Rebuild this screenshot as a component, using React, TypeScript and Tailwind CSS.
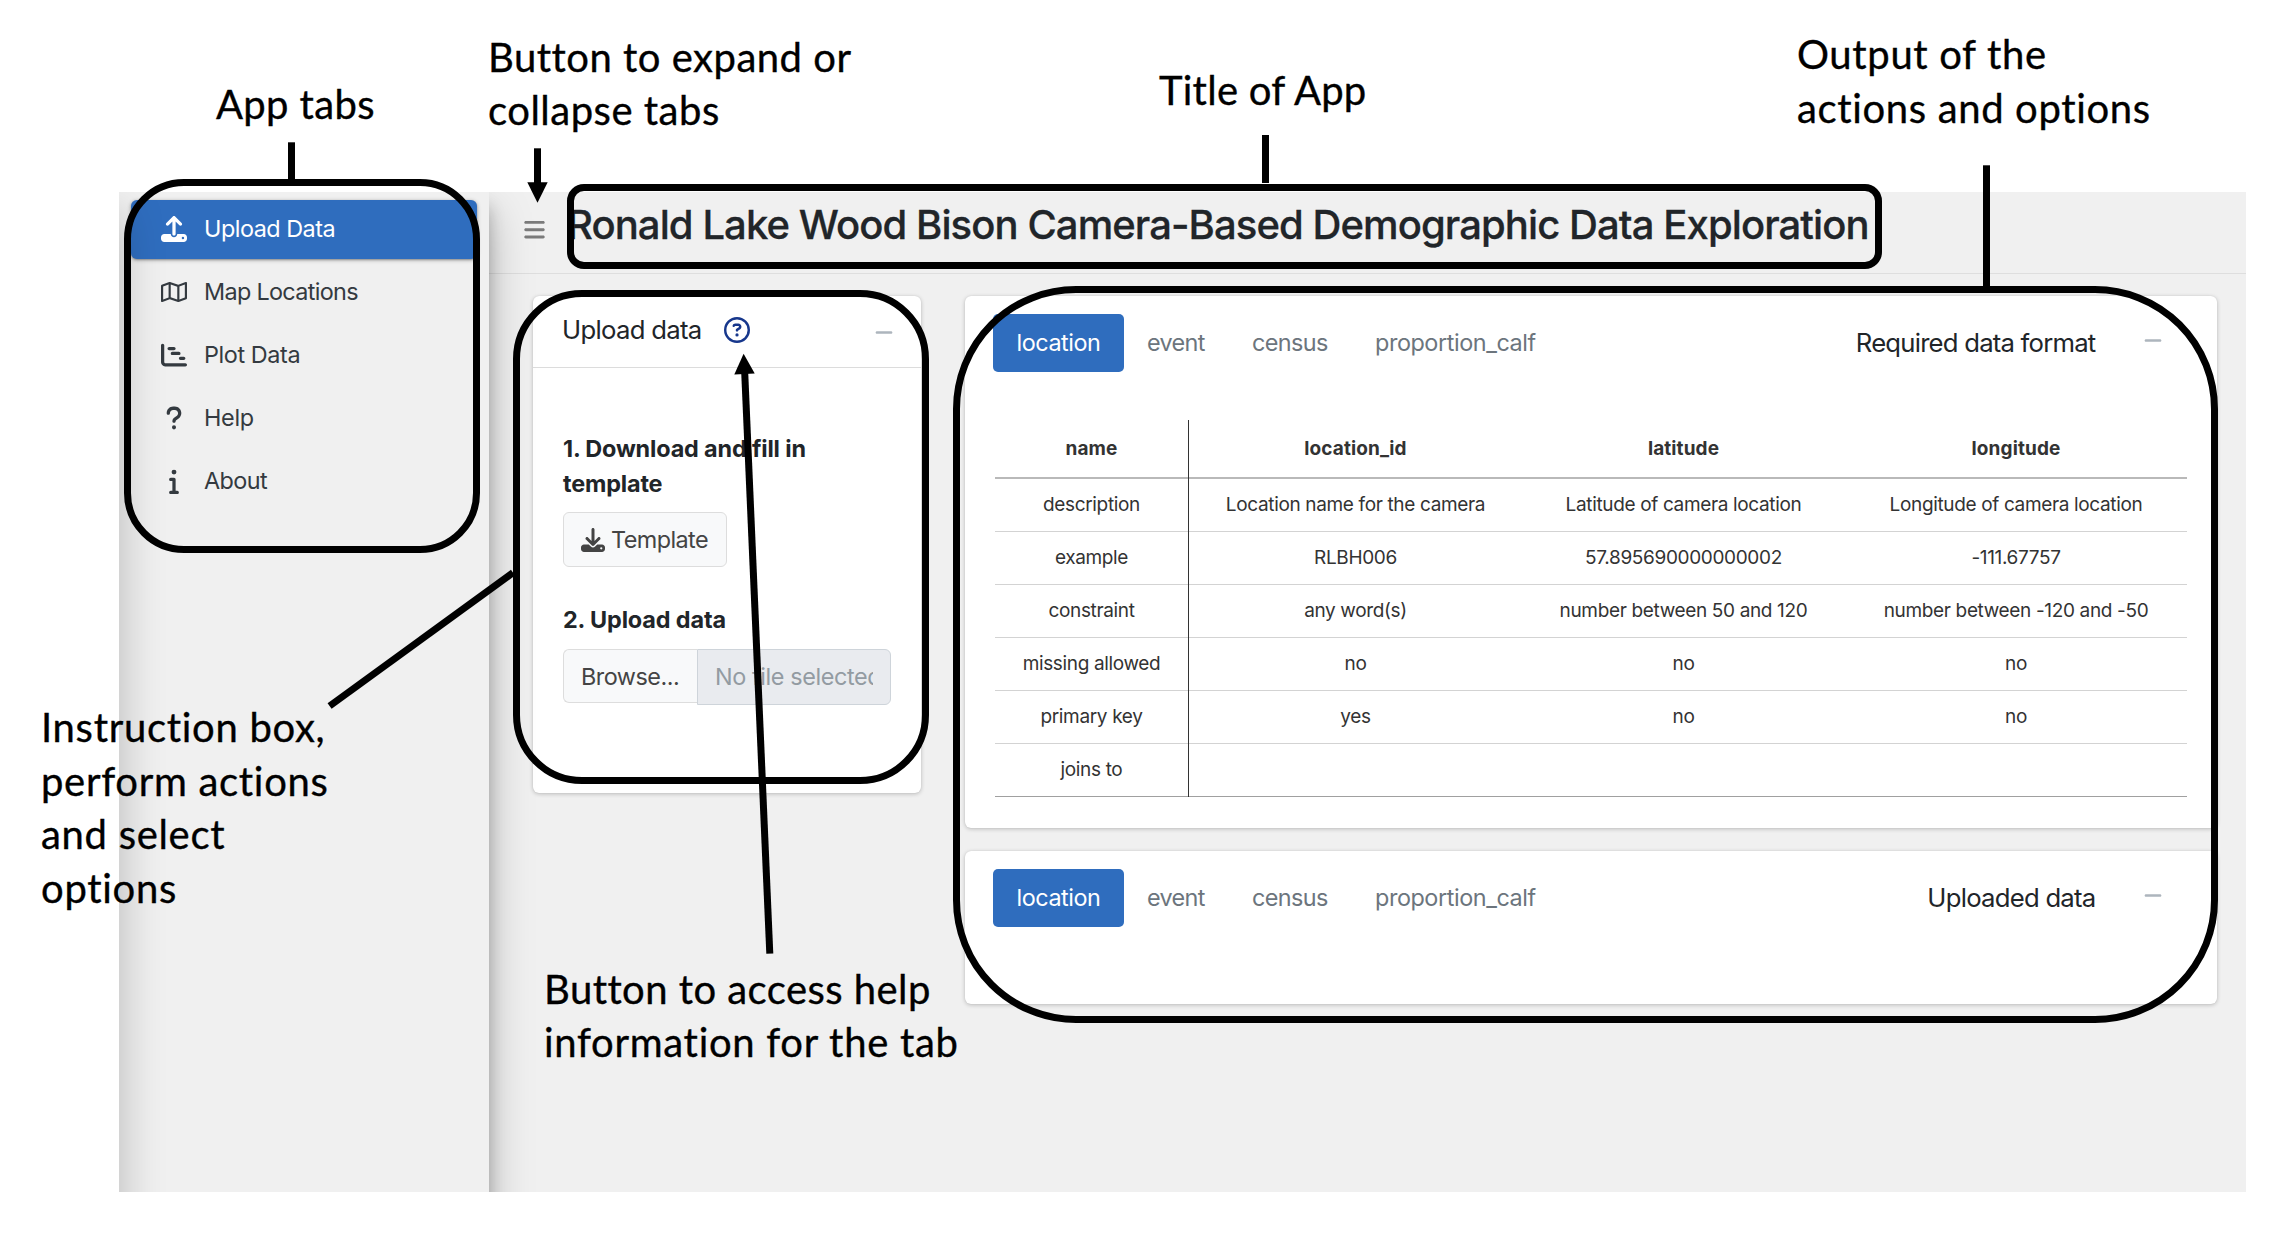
import type { ReactNode } from "react";
import {
  FaBars,
  FaChartGantt,
  FaDownload,
  FaInfo,
  FaMinus,
  FaQuestion,
  FaRegCircleQuestion,
  FaRegMap,
  FaUpload,
} from "react-icons/fa6";

const NAV = [
  { label: "Upload Data", icon: FaUpload, cls: "tracking-[-0.5px]", active: true },
  { label: "Map Locations", icon: FaRegMap, cls: "tracking-[-0.68px]", active: false },
  { label: "Plot Data", icon: FaChartGantt, cls: "tracking-[-0.4px]", active: false },
  { label: "Help", icon: FaQuestion, cls: "tracking-[-0.3px]", active: false },
  { label: "About", icon: FaInfo, cls: "tracking-[-0.6px]", active: false },
];

const ROWS = [
  ["description", "Location name for the camera", "Latitude of camera location", "Longitude of camera location"],
  ["example", "RLBH006", "57.895690000000002", "-111.67757"],
  ["constraint", "any word(s)", "number between 50 and 120", "number between -120 and -50"],
  ["missing allowed", "no", "no", "no"],
  ["primary key", "yes", "no", "no"],
  ["joins to", "", "", ""],
];

const CARD =
  "rounded-[6px] bg-white shadow-[0_0_1px_rgba(0,0,0,0.125),0_1px_4px_rgba(0,0,0,0.22)]";

function Sidebar() {
  return (
    <aside className="relative z-10 h-[1040px] w-[370px] shrink-0 bg-[#f0f0f0] pt-2 pl-3 shadow-[0_20px_41px_rgba(0,0,0,0.25),0_15px_15px_rgba(0,0,0,0.22)]">
      <nav className="flex w-[346px] flex-col gap-[4.5px] text-[23.4px] text-[#343a40]">
        {NAV.map(({ label, icon: Icon, cls, active }) => (
          <a
            key={label}
            className={
              active
                ? "flex h-[58.5px] items-center rounded-[6px] bg-[#2f6dbe] pb-px text-white shadow-[0_1px_4px_rgba(0,0,0,0.3),0_1px_2px_rgba(0,0,0,0.24)]"
                : "flex h-[58.5px] items-center pb-px"
            }
          >
            <span className="ml-[23px] flex w-10 justify-center">
              <Icon className="h-[26px] w-auto" />
            </span>
            <span className={"ml-[10px] " + cls}>{label}</span>
          </a>
        ))}
      </nav>
    </aside>
  );
}

function Minus() {
  return <FaMinus className="h-[21px] w-[18px] text-[#adb5bd]" />;
}

function Tabs({ title, titleCls }: { title: string; titleCls: string }) {
  return (
    <div className="flex items-start pt-[18px] pl-[28px]">
      <div className="flex h-[58px] items-center text-[23.4px] text-[#6c757d]">
        <span className="flex h-full w-[131px] items-center justify-center rounded-[5px] bg-[#2f6dbe] tracking-[-0.45px] text-white">
          location
        </span>
        <span className="w-[105px] pl-[23px] tracking-[-0.65px]">event</span>
        <span className="w-[123px] pl-[23px] tracking-[-0.6px]">census</span>
        <span className="pl-[23px] tracking-[-0.43px]">proportion_calf</span>
      </div>
      <div className="mr-[55px] ml-auto flex h-[58px] items-center">
        <span className={"mr-[48.5px] text-[25.7px] text-[#212529] " + titleCls}>{title}</span>
        <span className="pb-[6px]">
          <Minus />
        </span>
      </div>
    </div>
  );
}

function FormatTable() {
  return (
    <div className="mt-[48px] ml-[30px] w-[1192px] text-[19px] tracking-[-0.35px] text-[#333]">
      <div className="grid h-[59px] grid-cols-[194px_333px_323px_342px] border-b-2 border-[#b9b9b9] text-center font-bold tracking-[0.1px]">
        {["name", "location_id", "latitude", "longitude"].map((h, i) => (
          <div
            key={h}
            className={
              i === 0
                ? "flex h-[59px] items-center justify-center border-r border-[#333] pb-px"
                : "flex h-[59px] items-center justify-center pb-px"
            }
          >
            {h}
          </div>
        ))}
      </div>
      {ROWS.map((row, r) => (
        <div
          key={row[0]}
          className={
            r === ROWS.length - 1
              ? "grid h-[53px] grid-cols-[194px_333px_323px_342px] border-b border-[#a0a0a0]"
              : "grid h-[53px] grid-cols-[194px_333px_323px_342px] border-b border-[#d3d3d3]"
          }
        >
          {row.map((cell, i) => (
            <div
              key={i}
              className={
                i === 0
                  ? "flex h-[53px] items-center justify-center border-r border-[#333]"
                  : "flex h-[53px] items-center justify-center"
              }
            >
              {cell}
            </div>
          ))}
        </div>
      ))}
    </div>
  );
}

function UploadCard() {
  return (
    <section className={CARD + " h-[497px] w-[388px]"}>
      <header className="flex h-[72px] items-center border-b border-[#dcdcdc] pr-[28.5px] pb-[2px] pl-[29px]">
        <h2 className="text-[25.7px] tracking-[-0.7px] text-[#212529]">Upload data</h2>
        <FaRegCircleQuestion className="mb-[2px] ml-[22px] h-[26px] w-[26px] text-[#17378c]" />
        <span className="ml-auto pt-[4px]">
          <Minus />
        </span>
      </header>
      <div className="pt-[64px] pl-[30px] text-[23.4px] leading-[35px] text-[#212529]">
        <p className="-mt-px font-bold tracking-[-0.15px]">
          1. Download and fill in
          <br />
          template
        </p>
        <button className="mt-[11px] flex h-[55px] w-[164px] items-center rounded-[6px] border border-[#dddddd] bg-[#f8f9fa] pl-[17px] text-[#444]">
          <FaDownload className="h-[24px] w-[24px]" />
          <span className="ml-[6px] tracking-[-0.58px]">Template</span>
        </button>
        <p className="mt-[35px] font-bold tracking-[-0.12px]">2. Upload data</p>
        <div className="mt-[12px] flex items-start">
          <button className="h-[54px] w-[134px] rounded-l-[6px] border border-r-0 border-[#dddddd] bg-[#f8f9fa] pl-[17px] text-left tracking-[-0.5px] text-[#444]">
            Browse...
          </button>
          <div className="h-[56px] w-[194px] rounded-r-[6px] border border-[#ced4da] bg-[#e9ebef] px-[17px] py-[10px] text-[#939ba2]">
            <div className="-mt-px h-[35px] overflow-hidden whitespace-nowrap tracking-[-0.4px]">No file selected</div>
          </div>
        </div>
      </div>
    </section>
  );
}

function Note({ className, children }: { className: string; children: ReactNode }) {
  return (
    <div
      className={
        "absolute font-[Lato,sans-serif] text-[40px] whitespace-nowrap text-black [-webkit-text-stroke:0.35px_black] " +
        className
      }
    >
      {children}
    </div>
  );
}

function Annotations() {
  return (
    <div className="pointer-events-none absolute inset-0 z-30">
      <div className="absolute top-[179px] left-[124px] h-[374px] w-[356px] rounded-[60px] border-[7px] border-black" />
      <div className="absolute top-[184px] left-[567px] h-[85px] w-[1315px] rounded-[17px] border-[7px] border-black" />
      <div className="absolute top-[290px] left-[513px] h-[494px] w-[416px] rounded-[69px] border-[7px] border-black" />
      <div className="absolute top-[286px] left-[953px] h-[737px] w-[1265px] rounded-[123px] border-[7px] border-black" />
      <svg className="absolute inset-0" width="2288" height="1238" viewBox="0 0 2288 1238">
        <g stroke="#000" strokeWidth="7" fill="none">
          <path d="M291.5 142.3V182" />
          <path d="M537.5 148.3V186" />
          <path d="M1265.5 135V183" />
          <path d="M1986.5 165.3V288" />
          <path d="M329.6 706L513 572.7" />
          <path d="M769.8 953.7L744.6 370" />
        </g>
        <path d="M527.3 182.3H547.7L537.5 202.7Z" />
        <path d="M734.3 374.4L754.7 373.4L743.6 353.7Z" />
      </svg>
      <Note className="top-[77px] left-[216px] leading-[54px] tracking-[0.35px]">App tabs</Note>
      <Note className="top-[31px] left-[488px] leading-[53px] tracking-[0.5px]">
        Button to expand or
        <br />
        collapse tabs
      </Note>
      <Note className="top-[63px] left-[1159px] leading-[54px] tracking-[0.25px]">Title of App</Note>
      <Note className="top-[27px] left-[1797px] leading-[54px] tracking-[0.65px]">
        Output of the
        <br />
        actions and options
      </Note>
      <Note className="top-[701px] left-[41px] leading-[53.5px] tracking-[0.7px]">
        Instruction box,
        <br />
        perform actions
        <br />
        and select
        <br />
        options
      </Note>
      <Note className="top-[963px] left-[544px] leading-[53px] tracking-[0.6px]">
        <span className="tracking-[0.45px]">Button to access help</span>
        <br />
        <span className="tracking-[0.7px]">information for the tab</span>
      </Note>
    </div>
  );
}

export default function App() {
  return (
    <div className="relative h-[1238px] w-[2288px] overflow-hidden bg-white pt-[192px] pl-[119px] font-[Inter,sans-serif]">
      <div className="relative isolate flex h-[1000px] w-[2127px] overflow-hidden bg-[#f0f0f0]">
        <Sidebar />
        <main className="flex min-w-0 grow flex-col">
          <header className="flex h-[82px] items-center border-b border-[#dedede] pl-[35px]">
            <FaBars className="mt-[-6px] h-[23.4px] w-[21px] text-[#7b7b7b]" />
            <h1 className="mt-[-15px] ml-[22px] text-[40px] font-medium tracking-[-0.91px] whitespace-nowrap text-[#212529] [-webkit-text-stroke:0.3px_#212529]">
              Ronald Lake Wood Bison Camera-Based Demographic Data Exploration
            </h1>
          </header>
          <div className="flex items-start gap-[44px] pt-[22px] pl-[44px]">
            <UploadCard />
            <div className="flex w-[1252px] flex-col gap-[23px]">
              <section className={CARD + " h-[532px]"}>
                <Tabs title="Required data format" titleCls="tracking-[-0.78px]" />
                <FormatTable />
              </section>
              <section className={CARD + " h-[153px]"}>
                <Tabs title="Uploaded data" titleCls="tracking-[-0.75px]" />
              </section>
            </div>
          </div>
        </main>
        <div className="absolute top-0 -left-10 z-20 h-[1040px] w-10 shadow-[0_22px_45px_rgba(0,0,0,0.25)]" />
      </div>
      <Annotations />
    </div>
  );
}
